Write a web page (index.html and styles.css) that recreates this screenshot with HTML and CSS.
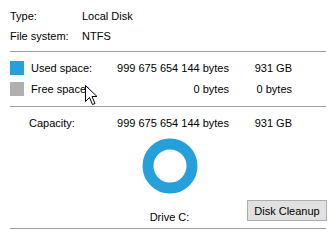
FILE: index.html
```html
<!DOCTYPE html>
<html>
<head>
<meta charset="utf-8">
<link rel="stylesheet" href="styles.css">
</head>
<body>
<div class="panel">
  <div class="info">
    <div class="row"><span class="lbl">Type:</span><span>Local Disk</span></div>
    <div class="row"><span class="lbl">File system:</span><span>NTFS</span></div>
  </div>
  <div class="divider"></div>
  <div class="space">
    <div class="srow">
      <span class="swatch used"></span><span class="slbl">Used space:</span><span class="bytes">999 675 654 144 bytes</span><span class="size">931 GB</span>
    </div>
    <div class="srow">
      <span class="swatch free"></span><span class="slbl">Free space:</span><span class="bytes">0 bytes</span><span class="size">0 bytes</span>
    </div>
    <svg class="cursor" width="13" height="21" viewBox="0 0 13 21">
      <polygon points="0.5,0.5 0.5,16.5 4.5,12.5 7.5,19.5 10,18.5 7,11.5 12,11.5" fill="#fff" stroke="#000" stroke-width="1" stroke-linejoin="miter"/>
    </svg>
  </div>
  <div class="divider"></div>
  <div class="capacity">
    <div class="srow">
      <span class="swatch none"></span><span class="slbl cap">Capacity:</span><span class="bytes">999 675 654 144 bytes</span><span class="size">931 GB</span>
    </div>
  </div>
  <div class="chart">
    <svg width="56" height="56" viewBox="0 0 56 56">
      <circle cx="28" cy="28" r="22" fill="none" stroke="#26a0da" stroke-width="11"/>
    </svg>
  </div>
  <div class="bottom">
    <span></span>
    <span class="drive">Drive C:</span>
    <button class="cleanup">Disk Cleanup</button>
  </div>
  <div class="divider"></div>
</div>
</body>
</html>
```
FILE: styles.css
```css
html, body {
  margin: 0;
  padding: 0;
  background: #fff;
}
body {
  font-family: "Liberation Sans", Arial, sans-serif;
  font-size: 11px;
  color: #000;
}
.panel {
  width: 317px;
  margin-left: 10px;
  padding-top: 6px;
}
.row {
  display: flex;
  height: 20px;
  align-items: center;
}
.lbl {
  width: 72px;
}
.divider {
  height: 1px;
  background: #a0a0a0;
  width: 316px;
}
.info {
  margin-bottom: 5px;
}
.space {
  position: relative;
  padding-top: 5px;
  padding-bottom: 7px;
}
.srow {
  display: grid;
  grid-template-columns: 14px 88px 117px 63px;
  height: 21px;
  align-items: center;
  white-space: nowrap;
}
.swatch {
  width: 14px;
  height: 14px;
}
.used { background: #26a0da; }
.free { background: #b0b0b0; }
.none { background: transparent; }
.slbl {
  padding-left: 7px;
}
.slbl.cap {
  padding-left: 5px;
}
.bytes, .size {
  text-align: right;
  white-space: nowrap;
}
.cursor {
  position: absolute;
  left: 75px;
  top: 33px;
}
.capacity {
  padding-top: 5px;
}
.chart {
  display: flex;
  justify-content: center;
  margin-top: 5px;
  padding-left: 3px;
}
.bottom {
  display: grid;
  grid-template-columns: 1fr auto 1fr;
  align-items: end;
  margin-top: 6px;
  margin-bottom: 7px;
  width: 317px;
}
.drive {
  line-height: 14px;
  margin-bottom: -3px;
  padding-left: 2px;
}
.cleanup {
  justify-self: end;
  font-family: "Liberation Sans", Arial, sans-serif;
  font-size: 11px;
  color: #000;
  background: #e1e1e1;
  border: 1px solid #adadad;
  height: 21px;
  width: 80px;
  padding: 0;
  margin: 0;
}
```
